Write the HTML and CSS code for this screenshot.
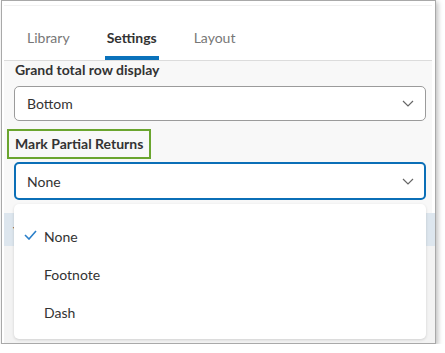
FILE: index.html
```html
<!DOCTYPE html>
<html>
<head>
<meta charset="utf-8">
<link rel="stylesheet" href="styles.css">
</head>
<body>
<div class="frame">
  <div class="panel">
    <nav class="tabs">
      <div class="tab">Library</div>
      <div class="tab active">Settings</div>
      <div class="tab">Layout</div>
    </nav>
    <div class="content">
      <div class="label">Grand total row display</div>
      <div class="select">
        <span>Bottom</span>
        <svg class="chev" width="12" height="7" viewBox="0 0 12 7"><path d="M1 1l5 5 5-5" fill="none" stroke="#666" stroke-width="1.2"/></svg>
      </div>
      <div class="label highlight">Mark Partial Returns</div>
      <div class="select focused">
        <span>None</span>
        <svg class="chev" width="12" height="7" viewBox="0 0 12 7"><path d="M1 1l5 5 5-5" fill="none" stroke="#666" stroke-width="1.2"/></svg>
      </div>
      <div class="under">
        <div class="band"><span class="hidden-text">Y</span></div>
      </div>
      <ul class="menu">
        <li class="item selected">
          <svg class="check" width="13" height="10" viewBox="0 0 13 10"><path d="M1 5l4 4 7-8" fill="none" stroke="#2a7fc9" stroke-width="1.6"/></svg>
          <span>None</span>
        </li>
        <li class="item"><span>Footnote</span></li>
        <li class="item"><span>Dash</span></li>
      </ul>
    </div>
  </div>
</div>
</body>
</html>
```
FILE: styles.css
```css
* { box-sizing: border-box; }
html, body { margin: 0; padding: 0; background: #fff; }
body { font-family: Lato, "Open Sans", sans-serif; color: #333; }

.frame {
  width: 435px;
  height: 344px;
  margin-left: 1px;
  border: 1px solid #a9a9a9;
  box-shadow: 2px 2px 5px rgba(0,0,0,0.25);
  background: #fff;
  padding: 4px 3px 0 2px;
  overflow: hidden;
}
.panel {
  height: 100%;
  border-top: 1px solid #f1f1f1;
  background: #f8f8f8;
  display: flex;
  flex-direction: column;
}
.tabs {
  height: 55px;
  background: #fff;
  border-bottom: 1px solid #dcdcdc;
  display: flex;
  gap: 33px;
  padding-left: 21px;
}
.tab {
  display: flex;
  align-items: flex-end;
  padding: 0 2px 10px;
  border-bottom: 4px solid transparent;
  font-size: 14px;
  line-height: 17px;
  color: #777;
}
.tab.active {
  color: #333;
  font-weight: 700;
  border-bottom-color: #0a72bb;
}
.content {
  flex: 1;
  position: relative;
  padding: 0 0 0 10px;
  display: flex;
  flex-direction: column;
}
.label {
  font-size: 14px;
  line-height: 17px;
  font-weight: 700;
  color: #333;
  margin-bottom: 8px;
  padding-left: 1px;
}
.label.highlight {
  align-self: flex-start;
  margin: 8px 0 3px -7px;
  padding: 4px 6px 5px 6px;
  border: 2px solid #6aa52e;
}
.select {
  width: 412px;
  height: 35px;
  background: #fff;
  border: 1px solid #9b9b9b;
  border-radius: 5px;
  display: flex;
  align-items: center;
  justify-content: space-between;
  padding: 0 11px 0 12px;
  font-size: 14px;
  color: #333;
}
.select.focused {
  height: 38px;
  border: 2px solid #0b6fb7;
  padding-left: 11px;
  padding-right: 10px;
}
.chev { display: block; }
.under {
  margin: 13px -3px 0 -10px;
  flex: 1;
  background: #f3f3f3;
}
.band {
  height: 33px;
  background: #dde6ee;
  padding: 10px 0 0 9px;
  font-size: 14px;
  color: #555;
}
.menu {
  position: absolute;
  left: 10px;
  top: 143px;
  width: 412px;
  height: 135px;
  margin: 0;
  padding: 13px 0 0;
  list-style: none;
  background: #fff;
  border-radius: 5px;
  box-shadow: 0 1px 3px rgba(0,0,0,0.15);
}
.item {
  height: 38px;
  display: flex;
  align-items: center;
  padding-left: 30px;
  font-size: 14px;
  color: #333;
  position: relative;
}
.item span { line-height: 17px; }
.check {
  position: absolute;
  left: 10px;
  top: 13px;
}
```
